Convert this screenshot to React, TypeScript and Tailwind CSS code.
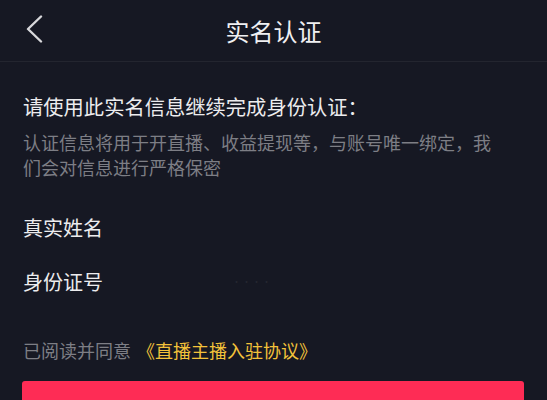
const FONT = '"Noto Sans CJK SC", "Noto Sans", sans-serif'

function Field({ label, hint }: { label: string; hint?: string }) {
  return (
    <div className="flex h-[54px] items-center">
      <span className="w-[209px] text-[20px] text-[#ececee]">{label}</span>
      {hint && (
        <span className="text-[9px] tracking-[1px] text-[#252731]">{hint}</span>
      )}
    </div>
  )
}

export default function App() {
  return (
    <div
      className="h-[400px] w-[547px] overflow-hidden bg-[#161823]"
      style={{ fontFamily: FONT }}
    >
      <header className="relative flex h-[62px] items-center justify-center border-b border-[#23252f]">
        <svg
          className="absolute left-[24px] top-[15px] h-[28px] w-[20px]"
          viewBox="0 0 20 28"
          fill="none"
        >
          <path
            d="M17 1.5 4 14l13 12.5"
            stroke="#d8d8db"
            strokeWidth="2.4"
            strokeLinecap="round"
            strokeLinejoin="round"
          />
        </svg>
        <h1 className="text-[24px] text-[#f0f0f2]">实名认证</h1>
      </header>

      <main className="px-[23px]">
        <p className="mt-[30px] text-[20.3px] leading-[28px] text-[#ececee]">
          请使用此实名信息继续完成身份认证：
        </p>
        <p className="mt-[10px] w-[480px] text-[18px] leading-[25px] text-[#7d7e85]">
          认证信息将用于开直播、收益提现等，与账号唯一绑定，我们会对信息进行严格保密
        </p>

        <div className="mt-[21px]">
          <Field label="真实姓名" />
          <Field label="身份证号" hint="••••" />
        </div>

        <p className="mt-[27px] text-[18px] leading-[28px] text-[#7d7e85]">
          已阅读并同意
          <span className="ml-[6px] text-[#f3c23a]">《直播主播入驻协议》</span>
        </p>

        <button className="mt-[17px] h-[48px] w-[502px] -translate-x-px rounded-[3px] bg-[#fe2c55]" />
      </main>
    </div>
  )
}
